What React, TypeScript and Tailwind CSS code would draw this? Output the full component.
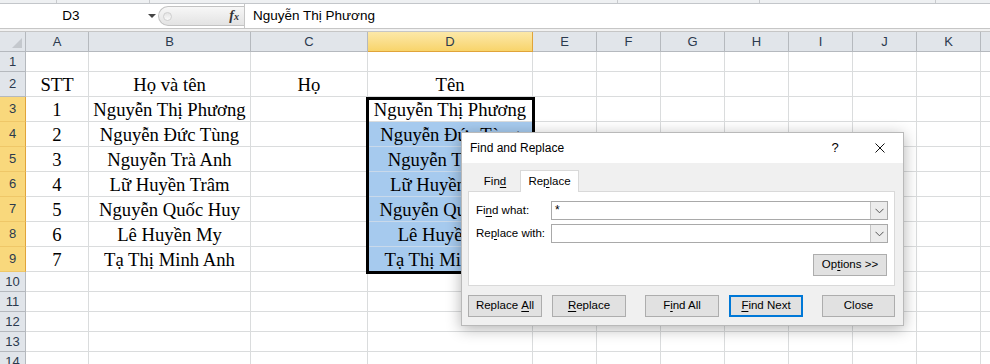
import React from "react";

const colW = [
  "w-[63px]",
  "w-[162px]",
  "w-[117px]",
  "w-[165px]",
  "w-[64px]",
  "w-[64px]",
  "w-[64px]",
  "w-[64px]",
  "w-[64px]",
  "w-[64px]",
  "w-[64px]",
  "w-[64px]",
];
const colNames = ["A", "B", "C", "D", "E", "F", "G", "H", "I", "J", "K", "L"];

const names = [
  "Nguyễn Thị Phương",
  "Nguyễn Đức Tùng",
  "Nguyễn Trà Anh",
  "Lữ Huyền Trâm",
  "Nguyễn Quốc Huy",
  "Lê Huyền My",
  "Tạ Thị Minh Anh",
];

type RowDef = { n: number; h: string; cells: string[] };

const rows: RowDef[] = [];
for (let n = 1; n <= 14; n++) {
  let h = "h-[20px]";
  if (n >= 2 && n <= 9) h = "h-[25px]";
  let cells: string[] = [];
  if (n === 2) cells = ["STT", "Họ và tên", "Họ", "Tên"];
  if (n >= 3 && n <= 9) cells = [String(n - 2), names[n - 3], "", names[n - 3]];
  rows.push({ n, h, cells });
}

function U({ children }: { children: React.ReactNode }) {
  return <span className="underline underline-offset-[2px]">{children}</span>;
}

function Chevron() {
  return (
    <svg width="9" height="6" viewBox="0 0 9 6">
      <path d="M0.5 0.8 L4.5 4.8 L8.5 0.8" fill="none" stroke="#555" strokeWidth="1" />
    </svg>
  );
}

function ComboInput({ value }: { value: string }) {
  return (
    <div className="flex h-[19px] w-[337px] border border-[#a9a9a9] bg-white">
      <div className="flex-1 pl-[3px] leading-[17px] text-[12px]">{value}</div>
      <div className="flex w-[17px] items-center justify-center border-l border-[#c4c4c4] bg-[#ececec]">
        <Chevron />
      </div>
    </div>
  );
}

function Btn({
  children,
  w,
  primary,
}: {
  children: React.ReactNode;
  w: string;
  primary?: boolean;
}) {
  return (
    <div
      className={
        primary
          ? `flex h-[22px] ${w} items-center justify-center whitespace-pre border-2 border-[#0078d7] bg-[#e1e1e1]`
          : `flex h-[22px] ${w} items-center justify-center whitespace-pre border border-[#adadad] bg-[#e1e1e1]`
      }
    >
      {children}
    </div>
  );
}

export default function App() {
  return (
    <div className="relative h-[364px] w-[990px] overflow-hidden bg-white font-['Liberation_Sans',Arial,sans-serif]">
      {/* ribbon remnant */}
      <div className="flex h-[4px] border-b border-[#c3c6ca] bg-[#eef0f2]">
        <div className="w-[57px] border-r border-[#c9cbce]" />
        <div className="w-[93px] border-r border-[#c9cbce]" />
        <div className="w-[468px] border-r border-[#c9cbce]" />
        <div className="w-[142px] border-r border-[#c9cbce]" />
        <div className="w-[176px] border-r border-[#c9cbce]" />
      </div>

      {/* formula bar */}
      <div className="flex h-[24px] bg-white">
        <div className="flex w-[158px] items-center">
          <span className="w-[142px] text-center text-[13.5px] text-black">D3</span>
          <span className="ml-[6px] h-0 w-0 border-x-[4px] border-t-[4px] border-x-transparent border-t-[#444]" />
        </div>
        <div className="flex w-[86px] items-center py-[2px]">
          <div className="flex h-[20px] w-full items-center rounded-l-full border border-r-0 border-[#c3c3c3] bg-gradient-to-b from-[#f7f7f7] to-[#e3e3e3]">
            <span className="ml-[4px] h-[9px] w-[9px] rounded-full border border-[#cfcfcf] bg-gradient-to-b from-[#e4e4e4] to-[#fafafa]" />
            <span className="ml-auto mr-[5px] font-['Liberation_Serif',serif] text-[14px] font-bold italic leading-none text-[#333]">
              f<span className="text-[10px]">x</span>
            </span>
          </div>
        </div>
        <div className="flex flex-1 items-center border-l border-[#c6c6c6] pl-[8px] text-[13.5px] text-black">
          Nguyễn Thị Phương
        </div>
      </div>

      {/* separator */}
      <div className="h-[4px] border-y border-[#c6c6c6] bg-[#f2f2f2]" />

      {/* grid */}
      <div className="flex flex-col">
        {/* header row */}
        <div className="flex h-[20px]">
          <div className="relative w-[26px] shrink-0 border-r border-b border-[#b5b9be] bg-[#e1e5ea]">
            <span className="absolute bottom-[3px] right-[3px] h-0 w-0 border-b-[10px] border-l-[10px] border-l-transparent border-b-[#c4c8cd]" />
          </div>
          {colNames.map((c, i) =>
            c === "D" ? (
              <div
                key={c}
                className={`${colW[i]} flex shrink-0 items-center justify-center border-r border-b border-[#e0a43a] bg-gradient-to-b from-[#fce8a8] to-[#f8d46a] text-[13px] text-[#2b3a4e]`}
              >
                {c}
              </div>
            ) : (
              <div
                key={c}
                className={`${colW[i]} flex shrink-0 items-center justify-center border-r border-b border-[#b5b9be] bg-[#e1e5ea] text-[13px] text-[#2b3a4e]`}
              >
                {c}
              </div>
            )
          )}
        </div>

        {rows.map((r) => {
          const hl = r.n >= 3 && r.n <= 9;
          return (
            <div key={r.n} className={`flex ${r.h}`}>
              <div
                className={
                  hl
                    ? "flex w-[26px] shrink-0 items-center justify-center border-r border-b border-r-[#e0a43a] border-b-[#efc768] bg-[#f9d87c] text-[13px] text-[#2b3a4e]"
                    : "flex w-[26px] shrink-0 items-center justify-center border-r border-b border-[#b5b9be] bg-[#e1e5ea] text-[13px] text-[#2b3a4e]"
                }
              >
                {r.n}
              </div>
              {colNames.map((c, i) => {
                const text = r.cells[i] ?? "";
                const sel = i === 3 && r.n >= 4 && r.n <= 9;
                return (
                  <div
                    key={c}
                    className={
                      sel
                        ? `${colW[i]} flex shrink-0 items-end justify-center overflow-visible whitespace-nowrap border-r border-b border-[#c9d9ea] bg-[#a6caee] font-['Liberation_Serif','Times_New_Roman',serif] text-[18.67px] leading-[normal] text-black`
                        : `${colW[i]} flex shrink-0 items-end justify-center overflow-visible whitespace-nowrap border-r border-b border-[#dadcdd] font-['Liberation_Serif','Times_New_Roman',serif] text-[18.67px] leading-[normal] text-black`
                    }
                  >
                    {text}
                  </div>
                );
              })}
            </div>
          );
        })}
      </div>

      {/* selection border */}
      <div className="pointer-events-none absolute left-[366px] top-[97px] h-[177px] w-[169px] border-[3px] border-black" />

      {/* Find and Replace dialog */}
      <div className="absolute left-[461px] top-[132px] w-[443px] border border-[#b9b9b9] bg-[#f0f0f0] text-[11.5px] text-black shadow-[0_3px_14px_rgba(0,0,0,0.3)]">
        <div className="flex h-[30px] items-center bg-white pl-[8px] pr-[18px]">
          <span className="flex-1 text-[12px]">Find and Replace</span>
          <span className="w-[12px] text-center text-[13px]">?</span>
          <span className="ml-[34px] flex">
            <svg width="10" height="10" viewBox="0 0 10 10">
              <path d="M0.5 0.5 L9.5 9.5 M9.5 0.5 L0.5 9.5" stroke="#111" strokeWidth="1" />
            </svg>
          </span>
        </div>

        <div className="flex flex-col pl-[6px] pr-[8px] pb-[8px] pt-[7px]">
          {/* tabs */}
          <div className="flex h-[21px] items-end pl-[2px]">
            <div className="flex h-[18px] w-[50px] items-center justify-center">
              Fin<U>d</U>
            </div>
            <div className="relative z-10 -mb-[1px] flex h-[22px] w-[59px] items-center justify-center border border-b-0 border-[#d9d9d9] bg-white">
              Re<U>p</U>lace
            </div>
          </div>

          {/* panel */}
          <div className="flex h-[95px] w-[427px] flex-col border border-[#d9d9d9] bg-white pl-[7px] pr-[6px] pt-[9px]">
            <div className="flex items-center">
              <span className="w-[75px]">
                Fi<U>n</U>d what:
              </span>
              <ComboInput value="*" />
            </div>
            <div className="mt-[4px] flex items-center">
              <span className="w-[75px]">
                Re<U>p</U>lace with:
              </span>
              <ComboInput value="" />
            </div>
            <div className="mt-[11px] flex justify-end pr-[1px]">
              <Btn w="w-[74px]">
                Op<U>t</U>ions &gt;&gt;
              </Btn>
            </div>
          </div>

          {/* buttons */}
          <div className="mt-[9px] flex">
            <Btn w="w-[74px]">
              {"Replace "}
              <U>A</U>
              {"ll"}
            </Btn>
            <div className="ml-[10px]">
              <Btn w="w-[74px]">
                <U>R</U>eplace
              </Btn>
            </div>
            <div className="ml-[19px]">
              <Btn w="w-[74px]">
                F<U>i</U>nd All
              </Btn>
            </div>
            <div className="ml-[10px]">
              <Btn w="w-[74px]" primary>
                <U>F</U>ind Next
              </Btn>
            </div>
            <div className="ml-[19px]">
              <Btn w="w-[73px]">Close</Btn>
            </div>
          </div>
        </div>
      </div>
    </div>
  );
}
